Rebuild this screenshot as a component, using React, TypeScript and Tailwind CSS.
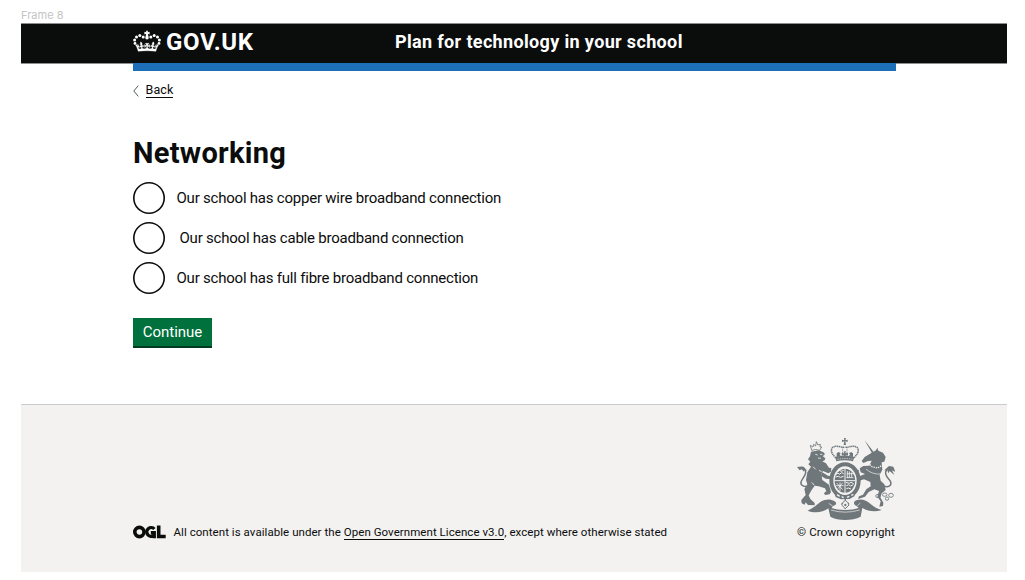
import React from "react";

function GovCrown() {
  return (
    <svg className="block h-[22px] w-[28px]" viewBox="0 0 28 22" fill="#fff" aria-hidden="true">
      <path d="M13 0.8h2l-.3 1.500 1.900-.5v2.600l-1.800-.6.9 3.800q.3 1.800-1.700 1.900q-2-.1-1.700-1.900l.9-3.800-1.800.6v-2.600l1.900.5z" />
      <circle cx="10.200" cy="6.900" r="1.500" />
      <circle cx="6.800" cy="5.500" r="1.500" />
      <circle cx="3.500" cy="6.900" r="1.500" />
      <circle cx="1.600" cy="9.900" r="1.500" />
      <circle cx="2" cy="13.400" r="1.400" />
      <circle cx="17.800" cy="6.900" r="1.500" />
      <circle cx="21.200" cy="5.500" r="1.500" />
      <circle cx="24.500" cy="6.900" r="1.500" />
      <circle cx="26.400" cy="9.900" r="1.500" />
      <circle cx="26" cy="13.400" r="1.400" />
      <path
        transform="translate(2.5 1.2) scale(.72)"
        stroke="#fff"
        strokeWidth=".4"
        d="M16 27.200c4.400 0 8.600.3 12.300.8 1.100-4.500 2.400-7 3.700-8.800l-2.500-.9c.2 1.300.3 1.900 0 2.700-.4-.4-.8-1.100-1.100-2.300l-1.200 4c.7-.5 1.300-.8 2-.9-1.100 2.500-2.600 3.100-3.500 3-1.100-.2-1.700-1.200-1.500-2.100.3-1.200 1.500-1.500 2.100-.1 1.100-2.300-.8-3-2-2.300 1.900-1.900 2.100-3.500.6-5.600-2.100 1.600-2.100 3.200-1.200 5.500-1.200-1.400-3.200-.6-2.500 1.600.9-1.400 2.100-.5 1.900.8-.2 1.100-1.700 2.100-3.500 1.900-2.700-.2-2.900-2.100-2.900-3.600.7-.1 1.900.5 2.900 1.900l.4-4.300c-1.100 1.100-2.100 1.400-3.200 1.400.4-1.200 2.100-3 2.100-3h-5.400s1.700 1.900 2.100 3c-1.100 0-2.100-.2-3.200-1.400l.4 4.300c1-1.400 2.200-2 2.900-1.900-.1 1.500-.2 3.400-2.900 3.600-1.900.2-3.400-.8-3.500-1.900-.2-1.300 1-2.200 1.900-.8.7-2.300-1.200-3-2.500-1.600.9-2.200.9-3.900-1.200-5.500-1.500 2-1.300 3.700.6 5.600-1.200-.7-3.100 0-2 2.300.6-1.400 1.800-1.100 2.100.1.2.9-.3 1.900-1.500 2.100-.9.2-2.400-.5-3.500-3 .6 0 1.200.3 2 .9l-1.200-4c-.3 1.100-.7 1.900-1.100 2.300-.3-.8-.2-1.400 0-2.700l-2.900.9C1.300 21 2.600 23.500 3.700 28c3.700-.5 7.900-.8 12.300-.8"
      />
    </svg>
  );
}

function OglMark() {
  return (
    <svg className="block h-[14px] w-[33px]" viewBox="0 0 33 14" fill="none" stroke="#0b0c0c" strokeWidth="3.600" aria-hidden="true">
      <circle cx="6.400" cy="7" r="4.600" />
      <path d="M21.400 4A4.400 4.400 0 1 0 20.300 10.800M17.800 7.700H21.300V13.200" strokeWidth="3.300" />
      <path d="M25.700 .5V11.500H32.700" />
    </svg>
  );
}

function RoyalArms() {
  return (
    <svg className="block h-[82px] w-[98px]" viewBox="36 39 294 246" fill="#6f777b" aria-hidden="true">
      {/* lion */}
      <path d="M80 76l-4-15 8 5 2-8 6 5 2-13 5 10 7-2-1 8 5 0-6 10q-12-5-24 0z" fill="none" stroke="#6f777b" strokeWidth="2.500" />
      <path d="M78 80l24-4 16 7 1 6-6 4 8 7-2 6-7 3 11 6 9 13 7 1-1 11-8 5-16-7-5 10 3 17 20 14 6 22-4 7-14 2-3-6 7-5-4-9-19-6-12-2-9 13-9 16 5 11 13 12v7l-20-1-7-8-3 7-9-4-1-10 13-15-4-18 9-14-4-13 4-23 11-17-8-7 6-8-7-7 6-9z" />
      <path d="M112 142l17 10 12 2-2 9-17-2-15-9z" />
      <path d="M70 184c-19 3-28-7-18-21s15-24 3-34" fill="none" stroke="#6f777b" strokeWidth="4.500" />
      <path d="M36 126q9-2 20-1l11 13-8-3-2 5-7-7-6 3z" />
      <path d="M91 88l7 2m7-2l7 0M99 99l9 1M84 125l8 8m10 3l8 4M80 172l8 9" stroke="#f3f2f1" strokeWidth="2.500" />
      {/* unicorn */}
      <path d="M239 46l27 35-5 4z" />
      <path d="M259 84l14-8 4-8 3 9 14 6 8 13-4 14-8 2 2 22-8 16 3 17 11 11 4 17-12 10-4 12 9 16-1 10-11 2 4-16-10-14 5-17-14-5-17 8-11 14-21 7 3-8 12-5 10-16 13-9-1-13-19-8-16 5-7-8-6-16 4-10 10 1-3 9 6 9 15-6-13-5-3-12 11-7 18-1 7-15-11 1-14 6-5-6 9-12z" />
      <path d="M249 114l12 11 17 4 15-9" fill="none" stroke="#f3f2f1" strokeWidth="4" strokeDasharray="4 3" />
      <path d="M243 132q18 17 45 15" fill="none" stroke="#f3f2f1" strokeWidth="2" />
      <path d="M295 183c20 7 30-6 16-21s-11-28 3-34" fill="none" stroke="#6f777b" strokeWidth="4.500" />
      <path d="M298 136l14-13 13 2 6 16-10-5 7 14-14-12-4 7-3-9z" />
      <g fill="none" stroke="#6f777b" strokeWidth="2.500">
        <ellipse cx="279" cy="213" rx="7" ry="5" />
        <ellipse cx="299" cy="209" rx="7" ry="5" />
        <ellipse cx="318" cy="211" rx="7" ry="6" />
        <circle cx="306" cy="221" r="5" />
      </g>
      {/* crown */}
      <path d="M177 39h6l-2 7 7-2v7l-7-2 2 11h-7l2-11-7 2v-7l7 2z" />
      <g fill="none" stroke="#6f777b">
        <path d="M152 98c-14-13-17-26-7-32 11-6 25 2 34 1m28 31c14-13 17-26 7-32-11-6-25 2-34 1" strokeWidth="4.500" strokeDasharray="4 1.500" />
        <path d="M173 66v28m13-28v28" strokeWidth="2.500" strokeDasharray="3 2" />
      </g>
      <path d="M150 96q29-9 58 0l-4 13q-25-6-50 0z" />
      <path d="M176 79h7l-2 6 8-1v7l-7-1 2 8h-9l2-8-7 1v-7l8 1zM155 85l6-4 6 4-3 4 4 5-13 2zM204 85l-6-4-6 4 3 4-4 5 13 2z" />
      <path d="M157 103q23-5 45 0" fill="none" stroke="#f3f2f1" strokeWidth="2" strokeDasharray="4 3" />
      {/* garter and shield */}
      <ellipse cx="180" cy="167" rx="41" ry="49" fill="#f3f2f1" stroke="#6f777b" strokeWidth="12" />
      <ellipse cx="180" cy="167" rx="31" ry="36" />
      <path d="M180 128v76M148 167h64" stroke="#f3f2f1" strokeWidth="3" />
      <g stroke="#f3f2f1" fill="none" strokeWidth="3">
        <path d="M153 148l6-4 4 4 7-5 6 3M152 156l8-2 6 3 10-3M158 139l6-3 4 3 8-3" />
        <path d="M183 172l10 3 5-3 8 4M184 182l7-3 6 4 8-4M184 191l6-2 8 3" />
        <path d="M187 138v21M193 139v20M200 142v16M184 158h21M185 146h20" strokeWidth="2.500" />
        <path d="M155 174l18 20M159 191l14-18M165 172v26M153 182h23" strokeWidth="2.500" />
      </g>
      <path d="M148 205l10-1 10 7 12 3 18-4 9-6 2 9-15 9-26 1-16-7z" />
      <path d="M156 209l8 5m6 1l6 3m10-1l7-3m6-3l6-3" stroke="#f3f2f1" strokeWidth="4" />
      {/* motto scroll */}
      <path d="M68 257c17-8 28-18 39-27 14-8 29-9 41-2 10 7 5 14-4 15l-4 6c18 7 61 8 81 0l-6-6c-9-3-12-12-1-17 15-5 27-2 39 8 12 10 21 17 37 21-20 7-40 4-58-6l-5 26c-26 13-68 13-91 0l-6-25c-16 12-41 16-62 7z" />
      <path d="M138 255q42 13 86 0M131 235l12 8m83-9l-9 8" fill="none" stroke="#f3f2f1" strokeWidth="2" />
      {/* thistle and rose badge */}
      <path d="M181 222v30m-11-18l9 7m13-7l-9 7" stroke="#6f777b" strokeWidth="4" />
      <path d="M181 226l7 6 4 8-11 11-11-11 4-8z" fill="#f3f2f1" stroke="#6f777b" strokeWidth="3" />
      <circle cx="181" cy="240" r="3.500" />
    </svg>
  );
}

const options = [
  { id: "copper", label: "Our school has copper wire broadband connection", style: "pl-[11.5px]" },
  { id: "cable", label: "Our school has cable broadband connection", style: "pl-[14.5px]" },
  { id: "fibre", label: "Our school has full fibre broadband connection", style: "pl-[11.5px]" },
];

export default function App() {
  return (
    <div className="h-[580px] w-[1025px] overflow-hidden bg-white pl-[21px] font-['Roboto','Noto_Sans',sans-serif] text-[#0b0c0c]">
      <div className="h-[23px] pt-[9px] font-['Inter',sans-serif] text-[11px] leading-[13px] text-[#c4c4c4]">Frame 8</div>
      <div className="flex h-[549px] w-[986px] flex-col">
        <header className="flex h-[41px] shrink-0 items-start border-y border-[#8c8d8d] bg-[#0b0c0c] pl-[112px] text-white">
          <div className="flex w-[262px] items-start gap-[5px] pt-[6px]">
            <GovCrown />
            <span className="pt-px text-[24px] leading-[22px] font-bold tracking-[0.65px]">GOV.UK</span>
          </div>
          <span className="pt-[6px] text-[18px] leading-[24px] font-bold tracking-[0.35px] whitespace-nowrap">Plan for technology in your school</span>
        </header>
        <main className="flex flex-1 flex-col items-start pl-[112px]">
          <div className="-mt-px h-[8px] w-[763px] shrink-0 bg-[#1d70b8]" />
          <a href="#" className="mt-[10px] flex h-[18px] items-center">
            <svg className="mt-px h-[12px] w-[6px]" viewBox="0 0 6 12" fill="none" stroke="#505a5f" strokeWidth="1"><path d="M5.300 .6L.8 6l4.500 5.400" /></svg>
            <span className="ml-[6.5px] border-b border-[#0b0c0c] text-[12.500px] leading-[14px] tracking-[0.1px]">Back</span>
          </a>
          <h1 className="mt-[35px] text-[29px] leading-[38px] font-bold tracking-[0.3px]">Networking</h1>
          <div className="mt-[10px] flex flex-col gap-[8px]">
            {options.map((o) => (
              <label key={o.id} className="flex h-[32px] items-center">
                <input type="radio" name="network" className="size-[32px] appearance-none rounded-full bg-white shadow-[inset_0_0_0_1.6px_#0b0c0c]" />
                <span className={`whitespace-pre text-[15px] leading-[20px] tracking-[-0.22px] ${o.style}`}>{o.label}</span>
              </label>
            ))}
          </div>
          <button className="mt-[24px] h-[30px] w-[79px] border-b-2 border-[#003d20] bg-[#00703c] text-[15px] leading-[27px] text-white">Continue</button>
        </main>
        <footer className="flex h-[168px] shrink-0 items-end justify-between border-t border-[#c9cbcc] bg-[#f3f2f1] pr-[112px] pb-[31px] pl-[112px] text-[11.500px] leading-[18px]">
          <div className="flex items-center">
            <OglMark />
            <span className="ml-[7.5px] tracking-[0.055px] whitespace-nowrap">
              All content is available under the <a href="#" className="border-b border-[#0b0c0c]">Open Government Licence v3.0</a>, except where otherwise stated
            </span>
          </div>
          <div className="flex w-[98px] flex-col items-center">
            <RoyalArms />
            <span className="mt-[3px] tracking-[0.16px] whitespace-nowrap">© Crown copyright</span>
          </div>
        </footer>
      </div>
    </div>
  );
}
